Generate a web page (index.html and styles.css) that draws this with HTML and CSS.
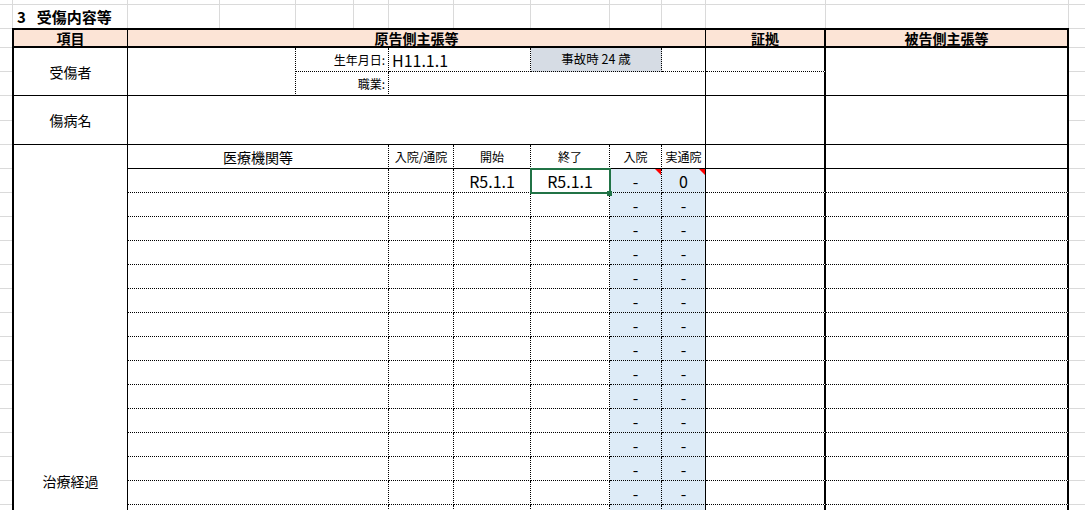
FILE: index.html
```html
<!DOCTYPE html>
<html lang="ja">
<head>
<meta charset="utf-8">
<title>受傷内容等</title>
<link rel="stylesheet" href="styles.css">
</head>
<body>
<div class="top">
  <div class="g r1"></div><div class="g r1"></div><div class="g r1"></div><div class="g r1"></div><div class="g r1"></div><div class="g r1"></div><div class="g r1"></div><div class="g r1"></div><div class="g r1"></div><div class="g r1"></div><div class="g r1"></div><div class="g r1"></div><div class="g r1"></div><div class="g r1 last"></div>
  <div class="g"></div><div class="g title"><span>3</span><span class="ttl">受傷内容等</span></div><div class="g"></div><div class="g"></div><div class="g"></div><div class="g"></div><div class="g"></div><div class="g"></div><div class="g"></div><div class="g"></div><div class="g"></div><div class="g"></div><div class="g"></div><div class="g last"></div>
</div>
<div class="main">
  <div class="gutter gutter-l">
    <div class="gc h19"></div><div class="gc"></div><div class="gc"></div><div class="gc h25"></div><div class="gc"></div><div class="gc"></div><div class="gc"></div><div class="gc"></div><div class="gc"></div><div class="gc"></div><div class="gc"></div><div class="gc"></div><div class="gc"></div><div class="gc"></div><div class="gc"></div><div class="gc"></div><div class="gc"></div><div class="gc"></div><div class="gc"></div><div class="gc"></div>
  </div>
  <div class="sheet">
    <!-- header -->
    <div class="c hd tb">項目</div>
    <div class="c hd tb span7">原告側主張等</div>
    <div class="c hd tb tr">証拠</div>
    <div class="c hd tb tr">被告側主張等</div>

    <!-- 受傷者 -->
    <div class="c label rs2">受傷者</div>
    <div class="c rs2 dr"></div>
    <div class="c small al-r dr db">生年月日:</div>
    <div class="c num al-l dr db span2">H11.1.1</div>
    <div class="c small grey dr db span2">事故時 24 歳</div>
    <div class="c db"></div>
    <div class="c tr db"></div>
    <div class="c tr rs2"></div>
    <div class="c small al-r dr">職業:</div>
    <div class="c span5"></div>
    <div class="c tr"></div>

    <!-- 傷病名 -->
    <div class="c label">傷病名</div>
    <div class="c span7"></div>
    <div class="c tr"></div>
    <div class="c tr"></div>

    <!-- 治療経過 -->
    <div class="c label rs28">治療経過</div>
    <div class="c sub dr span2">医療機関等</div>
    <div class="c small dr">入院/通院</div>
    <div class="c small dr">開始</div>
    <div class="c small dr">終了</div>
    <div class="c small dr">入院</div>
    <div class="c small">実通院</div>
    <div class="c tr"></div>
    <div class="c tr"></div>

    <div class="c dr db span2"></div><div class="c dr db"></div><div class="c num dr db">R5.1.1</div><div class="c num dr db selected">R5.1.1</div><div class="c num blue dr db note">-</div><div class="c num blue db note">0</div><div class="c tr db"></div><div class="c tr db"></div>
    <div class="c dr db span2"></div><div class="c dr db"></div><div class="c dr db"></div><div class="c dr db"></div><div class="c num blue dr db">-</div><div class="c num blue db">-</div><div class="c tr db"></div><div class="c tr db"></div>
    <div class="c dr db span2"></div><div class="c dr db"></div><div class="c dr db"></div><div class="c dr db"></div><div class="c num blue dr db">-</div><div class="c num blue db">-</div><div class="c tr db"></div><div class="c tr db"></div>
    <div class="c dr db span2"></div><div class="c dr db"></div><div class="c dr db"></div><div class="c dr db"></div><div class="c num blue dr db">-</div><div class="c num blue db">-</div><div class="c tr db"></div><div class="c tr db"></div>
    <div class="c dr db span2"></div><div class="c dr db"></div><div class="c dr db"></div><div class="c dr db"></div><div class="c num blue dr db">-</div><div class="c num blue db">-</div><div class="c tr db"></div><div class="c tr db"></div>
    <div class="c dr db span2"></div><div class="c dr db"></div><div class="c dr db"></div><div class="c dr db"></div><div class="c num blue dr db">-</div><div class="c num blue db">-</div><div class="c tr db"></div><div class="c tr db"></div>
    <div class="c dr db span2"></div><div class="c dr db"></div><div class="c dr db"></div><div class="c dr db"></div><div class="c num blue dr db">-</div><div class="c num blue db">-</div><div class="c tr db"></div><div class="c tr db"></div>
    <div class="c dr db span2"></div><div class="c dr db"></div><div class="c dr db"></div><div class="c dr db"></div><div class="c num blue dr db">-</div><div class="c num blue db">-</div><div class="c tr db"></div><div class="c tr db"></div>
    <div class="c dr db span2"></div><div class="c dr db"></div><div class="c dr db"></div><div class="c dr db"></div><div class="c num blue dr db">-</div><div class="c num blue db">-</div><div class="c tr db"></div><div class="c tr db"></div>
    <div class="c dr db span2"></div><div class="c dr db"></div><div class="c dr db"></div><div class="c dr db"></div><div class="c num blue dr db">-</div><div class="c num blue db">-</div><div class="c tr db"></div><div class="c tr db"></div>
    <div class="c dr db span2"></div><div class="c dr db"></div><div class="c dr db"></div><div class="c dr db"></div><div class="c num blue dr db">-</div><div class="c num blue db">-</div><div class="c tr db"></div><div class="c tr db"></div>
    <div class="c dr db span2"></div><div class="c dr db"></div><div class="c dr db"></div><div class="c dr db"></div><div class="c num blue dr db">-</div><div class="c num blue db">-</div><div class="c tr db"></div><div class="c tr db"></div>
    <div class="c dr db span2"></div><div class="c dr db"></div><div class="c dr db"></div><div class="c dr db"></div><div class="c num blue dr db">-</div><div class="c num blue db">-</div><div class="c tr db"></div><div class="c tr db"></div>
    <div class="c dr db span2"></div><div class="c dr db"></div><div class="c dr db"></div><div class="c dr db"></div><div class="c num blue dr db">-</div><div class="c num blue db">-</div><div class="c tr db"></div><div class="c tr db"></div>
    <div class="c dr db span2"></div><div class="c dr db"></div><div class="c dr db"></div><div class="c dr db"></div><div class="c num blue dr db">-</div><div class="c num blue db">-</div><div class="c tr db"></div><div class="c tr db"></div>
    <div class="c dr db span2"></div><div class="c dr db"></div><div class="c dr db"></div><div class="c dr db"></div><div class="c num blue dr db">-</div><div class="c num blue db">-</div><div class="c tr db"></div><div class="c tr db"></div>
    <div class="c dr db span2"></div><div class="c dr db"></div><div class="c dr db"></div><div class="c dr db"></div><div class="c num blue dr db">-</div><div class="c num blue db">-</div><div class="c tr db"></div><div class="c tr db"></div>
    <div class="c dr db span2"></div><div class="c dr db"></div><div class="c dr db"></div><div class="c dr db"></div><div class="c num blue dr db">-</div><div class="c num blue db">-</div><div class="c tr db"></div><div class="c tr db"></div>
    <div class="c dr db span2"></div><div class="c dr db"></div><div class="c dr db"></div><div class="c dr db"></div><div class="c num blue dr db">-</div><div class="c num blue db">-</div><div class="c tr db"></div><div class="c tr db"></div>
    <div class="c dr db span2"></div><div class="c dr db"></div><div class="c dr db"></div><div class="c dr db"></div><div class="c num blue dr db">-</div><div class="c num blue db">-</div><div class="c tr db"></div><div class="c tr db"></div>
    <div class="c dr db span2"></div><div class="c dr db"></div><div class="c dr db"></div><div class="c dr db"></div><div class="c num blue dr db">-</div><div class="c num blue db">-</div><div class="c tr db"></div><div class="c tr db"></div>
    <div class="c dr db span2"></div><div class="c dr db"></div><div class="c dr db"></div><div class="c dr db"></div><div class="c num blue dr db">-</div><div class="c num blue db">-</div><div class="c tr db"></div><div class="c tr db"></div>
    <div class="c dr db span2"></div><div class="c dr db"></div><div class="c dr db"></div><div class="c dr db"></div><div class="c num blue dr db">-</div><div class="c num blue db">-</div><div class="c tr db"></div><div class="c tr db"></div>
    <div class="c dr db span2"></div><div class="c dr db"></div><div class="c dr db"></div><div class="c dr db"></div><div class="c num blue dr db">-</div><div class="c num blue db">-</div><div class="c tr db"></div><div class="c tr db"></div>
    <div class="c dr db span2"></div><div class="c dr db"></div><div class="c dr db"></div><div class="c dr db"></div><div class="c num blue dr db">-</div><div class="c num blue db">-</div><div class="c tr db"></div><div class="c tr db"></div>
    <div class="c dr db span2"></div><div class="c dr db"></div><div class="c dr db"></div><div class="c dr db"></div><div class="c num blue dr db">-</div><div class="c num blue db">-</div><div class="c tr db"></div><div class="c tr db"></div>
    <div class="c dr db span2"></div><div class="c dr db"></div><div class="c dr db"></div><div class="c dr db"></div><div class="c num blue dr db">-</div><div class="c num blue db">-</div><div class="c tr db"></div><div class="c tr db"></div>
  </div>
  <div class="gutter gutter-r">
    <div class="gc h19"></div><div class="gc"></div><div class="gc"></div><div class="gc h25"></div><div class="gc"></div><div class="gc"></div><div class="gc"></div><div class="gc"></div><div class="gc"></div><div class="gc"></div><div class="gc"></div><div class="gc"></div><div class="gc"></div><div class="gc"></div><div class="gc"></div><div class="gc"></div><div class="gc"></div><div class="gc"></div><div class="gc"></div><div class="gc"></div>
  </div>
</div>
</body>
</html>
```

FILE: styles.css
```css
html, body {
  margin: 0;
  padding: 0;
  overflow: hidden;
  background: #ffffff;
}

body {
  width: 1085px;
  height: 510px;
  font-family: "Noto Sans CJK JP", "Noto Sans", sans-serif;
  color: #000;
}

/* spreadsheet gridlines above the table */
.top {
  display: grid;
  grid-template-columns: 13px 115px 92px 76px 58px 35px 65px 77px 79px 52px 44px 120px 243px 16px;
  grid-template-rows: 5px 23px;
}

.g {
  box-sizing: border-box;
  border-right: 1px solid #dadada;
}

.g.last {
  border-right: none;
}

.g.r1 {
  border-bottom: 1px solid #dadada;
}

.title {
  font-size: 15px;
  font-weight: bold;
  line-height: 23px;
  padding-left: 4px;
  white-space: nowrap;
}

.ttl {
  margin-left: 11px;
}

.main {
  display: flex;
  align-items: flex-start;
}

.gutter {
  display: flex;
  flex-direction: column;
  border-top: 1px solid #dadada;
}

.gutter-l {
  width: 12px;
  flex: none;
}

.gutter-r {
  flex: 1;
}

.gc {
  box-sizing: border-box;
  height: 24px;
  border-bottom: 1px solid #dadada;
  flex: none;
}

.gc.h19 {
  height: 19px;
}

.gc.h25 {
  height: 25px;
}

/* the form table */
.sheet {
  box-sizing: border-box;
  width: 1057px;
  flex: none;
  display: grid;
  grid-template-columns: 114px 168px 93px 65px 77px 79px 52px 44px 120px 243px;
  grid-template-rows: 18px 24px 24px 49px 24px;
  grid-auto-rows: 24px;
  border-left: 2px solid #000;
  border-top: 2px solid #000;
}

.c {
  box-sizing: border-box;
  position: relative;
  display: flex;
  align-items: center;
  justify-content: center;
  border-right: 1px solid #000;
  border-bottom: 1px solid #000;
  white-space: nowrap;
  line-height: 1;
}

.dr { border-right: 1px dotted #000; }
.db { border-bottom: 1px dotted #000; }
.tr { border-right: 2px solid #000; }
.tb { border-bottom: 2px solid #000; }

.span2 { grid-column: span 2; }
.span5 { grid-column: span 5; }
.span7 { grid-column: span 7; }
.rs2 { grid-row: span 2; }
.rs28 { grid-row: span 28; }

.hd {
  background: #fce4d6;
  font-size: 14px;
  font-weight: bold;
}

.label,
.sub {
  font-size: 14px;
}

.small {
  font-size: 12px;
}

.grey.small {
  font-size: 12.5px;
}

.num {
  font-size: 16px;
}

.al-r {
  justify-content: flex-end;
  padding-right: 3px;
}

.al-l {
  justify-content: flex-start;
  padding-left: 3px;
}

.grey {
  background: #d6dce4;
}

.blue {
  background: #ddebf7;
}

.note::after {
  content: "";
  position: absolute;
  top: 0;
  right: 0;
  width: 0;
  height: 0;
  border-left: 6px solid transparent;
  border-top: 6px solid #ff0000;
}

.selected::after {
  content: "";
  position: absolute;
  top: -1px;
  left: -1px;
  right: -2px;
  bottom: -2px;
  border: 2px solid #217346;
  z-index: 2;
}

.selected::before {
  content: "";
  position: absolute;
  right: -3px;
  bottom: -4px;
  width: 5px;
  height: 5px;
  background: #217346;
  z-index: 3;
}
```
